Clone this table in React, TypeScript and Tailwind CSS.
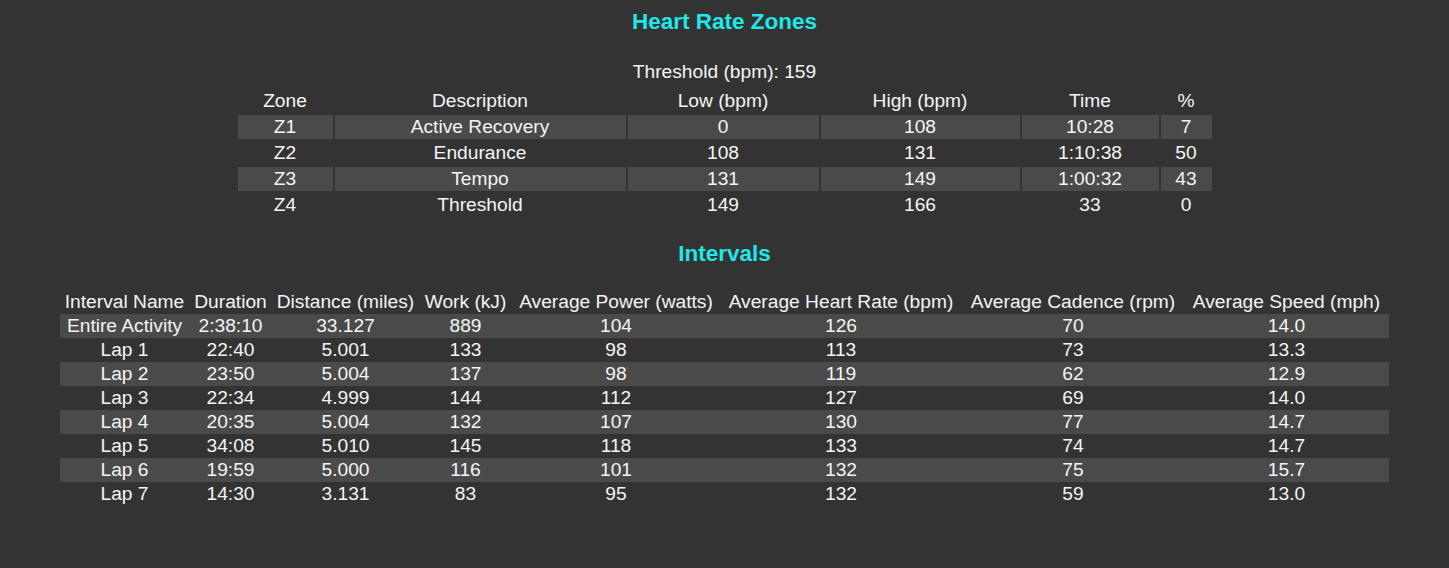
const zones = [
  { zone: 'Z1', description: 'Active Recovery', low: '0', high: '108', time: '10:28', pct: '7' },
  { zone: 'Z2', description: 'Endurance', low: '108', high: '131', time: '1:10:38', pct: '50' },
  { zone: 'Z3', description: 'Tempo', low: '131', high: '149', time: '1:00:32', pct: '43' },
  { zone: 'Z4', description: 'Threshold', low: '149', high: '166', time: '33', pct: '0' },
]

const intervals = [
  ['Entire Activity', '2:38:10', '33.127', '889', '104', '126', '70', '14.0'],
  ['Lap 1', '22:40', '5.001', '133', '98', '113', '73', '13.3'],
  ['Lap 2', '23:50', '5.004', '137', '98', '119', '62', '12.9'],
  ['Lap 3', '22:34', '4.999', '144', '112', '127', '69', '14.0'],
  ['Lap 4', '20:35', '5.004', '132', '107', '130', '77', '14.7'],
  ['Lap 5', '34:08', '5.010', '145', '118', '133', '74', '14.7'],
  ['Lap 6', '19:59', '5.000', '116', '101', '132', '75', '15.7'],
  ['Lap 7', '14:30', '3.131', '83', '95', '132', '59', '13.0'],
]

function ZonesTable() {
  return (
    <table className="border-separate border-spacing-[2px] table-fixed">
      <thead>
        <tr className="h-[24px]">
          <th className="w-[95px] p-0 font-normal">Zone</th>
          <th className="w-[291px] p-0 font-normal">Description</th>
          <th className="w-[191px] p-0 font-normal">Low (bpm)</th>
          <th className="w-[199px] p-0 font-normal">High (bpm)</th>
          <th className="w-[137px] p-0 font-normal">Time</th>
          <th className="w-[51px] p-0 font-normal">%</th>
        </tr>
      </thead>
      <tbody>
        {zones.map((z, i) => (
          <tr key={z.zone} className={i % 2 === 0 ? 'h-[24px] bg-[#4a4a4a]' : 'h-[24px]'}>
            <td className="p-0">{z.zone}</td>
            <td className="p-0">{z.description}</td>
            <td className="p-0">{z.low}</td>
            <td className="p-0">{z.high}</td>
            <td className="p-0">{z.time}</td>
            <td className="p-0">{z.pct}</td>
          </tr>
        ))}
      </tbody>
    </table>
  )
}

function IntervalsTable() {
  return (
    <table className="w-[1329px] border-collapse table-fixed">
      <thead>
        <tr className="h-[24px]">
          <th className="w-[129px] p-0 font-normal">Interval Name</th>
          <th className="w-[83px] p-0 font-normal">Duration</th>
          <th className="w-[147px] p-0 font-normal">Distance (miles)</th>
          <th className="w-[93px] p-0 font-normal">Work (kJ)</th>
          <th className="w-[208px] p-0 font-normal">Average Power (watts)</th>
          <th className="w-[242px] p-0 font-normal">Average Heart Rate (bpm)</th>
          <th className="w-[222px] p-0 font-normal">Average Cadence (rpm)</th>
          <th className="w-[205px] p-0 font-normal">Average Speed (mph)</th>
        </tr>
      </thead>
      <tbody>
        {intervals.map((row, i) => (
          <tr key={row[0]} className={i % 2 === 0 ? 'h-[24px] bg-[#4a4a4a]' : 'h-[24px]'}>
            {row.map((cell, j) => (
              <td key={j} className="p-0">
                {cell}
              </td>
            ))}
          </tr>
        ))}
      </tbody>
    </table>
  )
}

export default function App() {
  return (
    <div className="flex min-h-[568px] w-full flex-col items-center bg-[#333333] text-center font-['Liberation_Sans',Arial,sans-serif] text-[19.2px] leading-[22px] text-[#f4f4f4]">
      <h3 className="mt-[9px] text-[22.5px] font-bold leading-[26px] text-[#1ee8e8]">Heart Rate Zones</h3>
      <p className="mt-[26px]">Threshold (bpm): 159</p>
      <div className="mt-[4px]">
        <ZonesTable />
      </div>
      <h3 className="mt-[22px] text-[22.5px] font-bold leading-[26px] text-[#1ee8e8]">Intervals</h3>
      <div className="mt-[23px]">
        <IntervalsTable />
      </div>
    </div>
  )
}
